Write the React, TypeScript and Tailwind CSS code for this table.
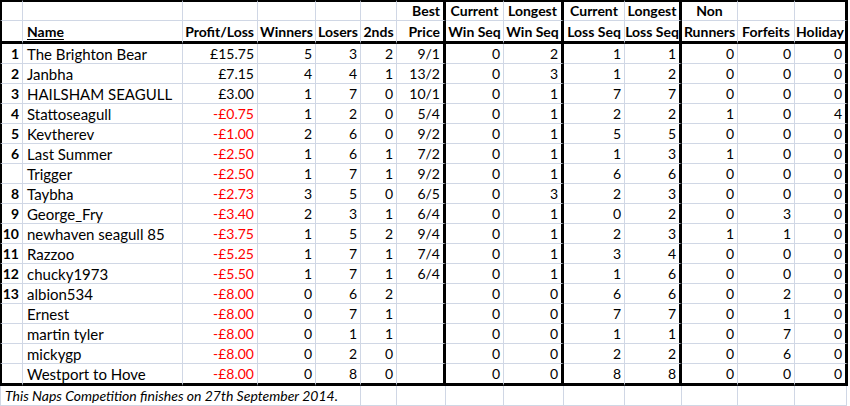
type Row = {
  rank: string;
  name: string;
  pl: string;
  neg: boolean;
  nums: string[];
};

const raw: [string, string, string, string[]][] = [
  ['1', 'The Brighton Bear', '£15.75', ['5', '3', '2', '9/1', '0', '2', '1', '1', '0', '0', '0']],
  ['2', 'Janbha', '£7.15', ['4', '4', '1', '13/2', '0', '3', '1', '2', '0', '0', '0']],
  ['3', 'HAILSHAM SEAGULL', '£3.00', ['1', '7', '0', '10/1', '0', '1', '7', '7', '0', '0', '0']],
  ['4', 'Stattoseagull', '-£0.75', ['1', '2', '0', '5/4', '0', '1', '2', '2', '1', '0', '4']],
  ['5', 'Kevtherev', '-£1.00', ['2', '6', '0', '9/2', '0', '1', '5', '5', '0', '0', '0']],
  ['6', 'Last Summer', '-£2.50', ['1', '6', '1', '7/2', '0', '1', '1', '3', '1', '0', '0']],
  ['', 'Trigger', '-£2.50', ['1', '7', '1', '9/2', '0', '1', '6', '6', '0', '0', '0']],
  ['8', 'Taybha', '-£2.73', ['3', '5', '0', '6/5', '0', '3', '2', '3', '0', '0', '0']],
  ['9', 'George_Fry', '-£3.40', ['2', '3', '1', '6/4', '0', '1', '0', '2', '0', '3', '0']],
  ['10', 'newhaven seagull 85', '-£3.75', ['1', '5', '2', '9/4', '0', '1', '2', '3', '1', '1', '0']],
  ['11', 'Razzoo', '-£5.25', ['1', '7', '1', '7/4', '0', '1', '3', '4', '0', '0', '0']],
  ['12', 'chucky1973', '-£5.50', ['1', '7', '1', '6/4', '0', '1', '1', '6', '0', '0', '0']],
  ['13', 'albion534', '-£8.00', ['0', '6', '2', '', '0', '0', '6', '6', '0', '2', '0']],
  ['', 'Ernest', '-£8.00', ['0', '7', '1', '', '0', '0', '7', '7', '0', '1', '0']],
  ['', 'martin tyler', '-£8.00', ['0', '1', '1', '', '0', '0', '1', '1', '0', '7', '0']],
  ['', 'mickygp', '-£8.00', ['0', '2', '0', '', '0', '0', '2', '2', '0', '6', '0']],
  ['', 'Westport to Hove', '-£8.00', ['0', '8', '0', '', '0', '0', '8', '8', '0', '0', '0']],
];

const rows: Row[] = raw.map(([rank, name, pl, nums]) => ({
  rank,
  name,
  pl,
  neg: pl.startsWith('-'),
  nums,
}));

const cols =
  'grid grid-cols-[23px_160px_75px_58px_45px_36px_49px_58px_60px_61px_57px_56px_57px_53px]';

// per column vertical borders (thick black on the section edges)
const colBorder = [
  'border-l-2 border-l-black border-r border-r-[#d0d7e5]',
  'border-r border-r-[#d0d7e5]',
  'border-r border-r-[#d0d7e5]',
  'border-r border-r-[#d0d7e5]',
  'border-r border-r-[#d0d7e5]',
  'border-r border-r-[#d0d7e5]',
  'border-r-[3px] border-r-black',
  'border-r border-r-[#d0d7e5]',
  'border-r-[3px] border-r-black',
  'border-r border-r-[#d0d7e5]',
  'border-r-[3px] border-r-black',
  'border-r border-r-[#d0d7e5]',
  'border-r border-r-[#d0d7e5]',
  'border-r-[3px] border-r-black',
];

function Cell({
  i,
  row,
  align = 'right',
  className = '',
  children,
}: {
  i: number;
  row: string;
  align?: 'left' | 'right' | 'center';
  className?: string;
  children?: React.ReactNode;
}) {
  const a =
    align === 'left' ? 'justify-start pl-[4px]' : align === 'center' ? 'justify-center' : 'justify-end pr-[3px]';
  return (
    <div className={`flex items-end overflow-visible whitespace-nowrap ${a} ${colBorder[i]} ${row} ${className}`}>
      {children}
    </div>
  );
}

const top1 = ['', '', '', '', '', '', 'Best', 'Current', 'Longest', 'Current', 'Longest', 'Non', '', ''];
const top2 = [
  '',
  'Name',
  'Profit/Loss',
  'Winners',
  'Losers',
  '2nds',
  'Price',
  'Win Seq',
  'Win Seq',
  'Loss Seq',
  'Loss Seq',
  'Runners',
  'Forfeits',
  'Holiday',
];
const align1: ('left' | 'right' | 'center')[] = [
  'right', 'left', 'right', 'center', 'center', 'center', 'right', 'center', 'center', 'center', 'center', 'center', 'center', 'center',
];

export default function App() {
  return (
    <div
      className="w-[850px] h-[406px] bg-white text-black text-[14px] leading-[18px] overflow-hidden"
      style={{ fontFamily: 'Lato, "Liberation Sans", sans-serif' }}
    >
      {/* header line 1 */}
      <div className={`${cols} h-[21px]`}>
        {top1.map((t, i) => (
          <Cell key={i} i={i} align={align1[i]} row="border-t-2 border-t-black border-b border-b-[#d0d7e5] font-bold">
            {t}
          </Cell>
        ))}
      </div>
      {/* header line 2 */}
      <div className={`${cols} h-[23px]`}>
        {top2.map((t, i) => (
          <Cell key={i} i={i} align={align1[i]} row="border-b-[3px] border-b-black font-bold">
            {i === 1 ? <span className="underline underline-offset-2">{t}</span> : t}
          </Cell>
        ))}
      </div>
      {rows.map((r, idx) => {
        const last = idx === rows.length - 1;
        const rb = last ? 'border-b-[3px] border-b-black' : 'border-b border-b-[#d0d7e5]';
        return (
          <div key={idx} className={`${cols} ${last ? 'h-[22px]' : 'h-5'}`}>
            <Cell i={0} row={rb} className="font-bold">
              {r.rank}
            </Cell>
            <Cell i={1} row={rb} align="left" className="text-[15px]">
              {r.name}
            </Cell>
            <Cell i={2} row={rb} className={r.neg ? 'text-[#ff0000]' : ''}>
              {r.pl}
            </Cell>
            {r.nums.map((n, j) => (
              <Cell key={j} i={j + 3} row={rb}>
                {n}
              </Cell>
            ))}
          </div>
        );
      })}
      {/* footer */}
      <div className="grid grid-cols-[361px_36px_49px_58px_60px_61px_57px_56px_57px_52px] h-5">
        <div className="flex items-end pl-[4px] italic whitespace-nowrap border-l border-l-[#d0d7e5] border-r border-r-[#d0d7e5] border-b border-b-[#d0d7e5]">
          This Naps Competition finishes on 27th September 2014.
        </div>
        {Array.from({ length: 9 }).map((_, i) => (
          <div key={i} className="border-r border-r-[#d0d7e5] border-b border-b-[#d0d7e5]" />
        ))}
      </div>
    </div>
  );
}
